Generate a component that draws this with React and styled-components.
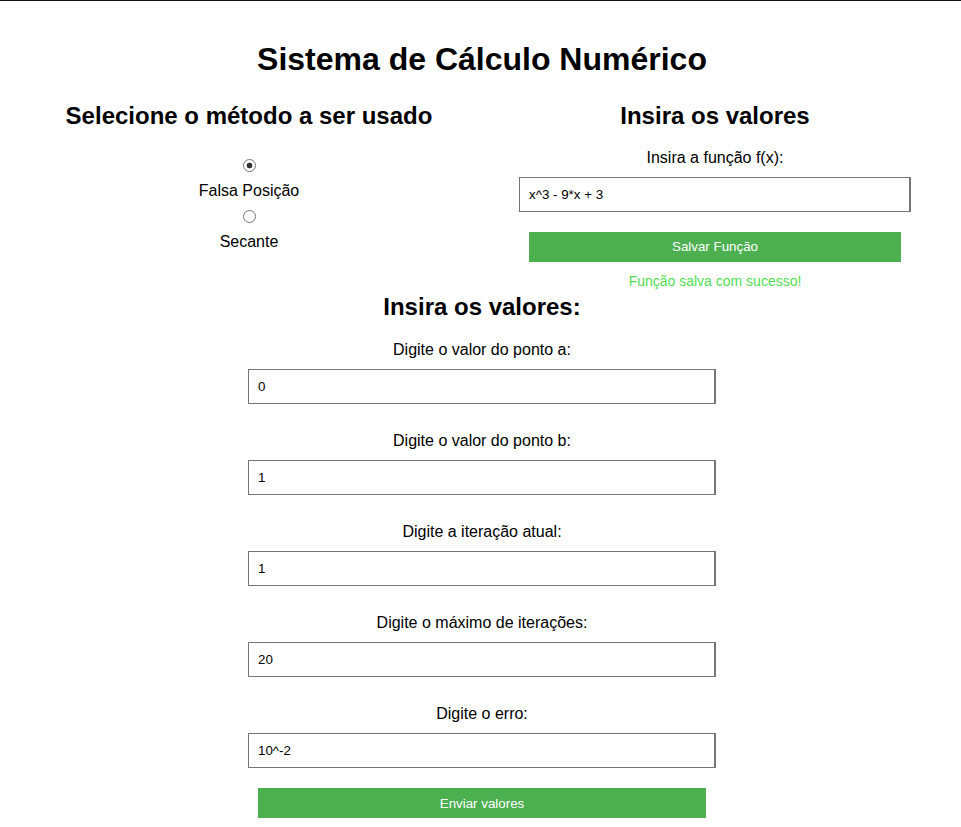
import React, { useState } from 'react'
import styled, { createGlobalStyle } from 'styled-components'

const GlobalStyle = createGlobalStyle`
  * {
    box-sizing: border-box;
  }

  body {
    margin: 0;
    background: #fff;
    color: #000;
    font-family: "Liberation Sans", Arial, sans-serif;
  }
`

const Page = styled.div`
  border-top: 1px solid #111;
  padding: 0 13px 0 16px;
  min-height: 100vh;
`

const Title = styled.h1`
  margin: 40px 0 0;
  font-size: 32px;
  font-weight: bold;
  line-height: normal;
  text-align: center;
`

const Columns = styled.div`
  display: grid;
  grid-template-columns: 1fr 1fr;
  margin-top: 24px;
`

const Column = styled.div`
  display: flex;
  flex-direction: column;
  align-items: center;
`

const SectionTitle = styled.h2`
  margin: ${p => (p.$top ? `${p.$top}px 0 0` : '0')};
  font-size: 24px;
  font-weight: bold;
  line-height: normal;
  text-align: center;
`

const RadioList = styled.div`
  display: flex;
  flex-direction: column;
  align-items: center;
  margin-top: 29px;
`

const Radio = styled.input.attrs({ type: 'radio' })`
  appearance: none;
  width: 13px;
  height: 13px;
  margin: 0;
  border: 1px solid #767676;
  border-radius: 50%;
  background: #fff;

  &:checked {
    background: radial-gradient(circle, #333 0 2.6px, #fff 3.2px);
  }
`

const OptionLabel = styled.label`
  margin: 9.5px 0 10.5px;
  font-size: 16px;
  line-height: 18.4px;
`

const FieldLabel = styled.label`
  margin-top: ${p => p.$top}px;
  font-size: 16px;
  line-height: 18.4px;
  text-align: center;
`

const TextInput = styled.input`
  width: ${p => p.$width}px;
  height: 35px;
  margin-top: 10px;
  padding: 0 9px;
  border: 1px solid #767676;
  border-right-width: 2px;
  background: #fff;
  color: #000;
  font-family: "Liberation Sans", Arial, sans-serif;
  font-size: 13.33px;
  outline: none;
`

const GreenButton = styled.button`
  width: ${p => p.$width}px;
  height: 30px;
  margin-top: 20px;
  border: none;
  background: #4caf50;
  color: #fff;
  font-family: "Liberation Sans", Arial, sans-serif;
  font-size: 13.33px;
  cursor: pointer;
`

const SuccessMessage = styled.p`
  margin: 11px 0 0;
  color: #52dc52;
  font-size: 14px;
  line-height: 16px;
`

const MainForm = styled.div`
  display: flex;
  flex-direction: column;
  align-items: center;
`

const fields = [
  { label: 'Digite o valor do ponto a:', value: '0' },
  { label: 'Digite o valor do ponto b:', value: '1' },
  { label: 'Digite a iteração atual:', value: '1' },
  { label: 'Digite o máximo de iterações:', value: '20' },
  { label: 'Digite o erro:', value: '10^-2' },
]

export default function App() {
  const [method, setMethod] = useState('falsa')

  return (
    <Page>
      <GlobalStyle />
      <Title>Sistema de Cálculo Numérico</Title>

      <Columns>
        <Column>
          <SectionTitle>Selecione o método a ser usado</SectionTitle>
          <RadioList>
            <Radio
              id="falsa"
              name="metodo"
              checked={method === 'falsa'}
              onChange={() => setMethod('falsa')}
            />
            <OptionLabel htmlFor="falsa">Falsa Posição</OptionLabel>
            <Radio
              id="secante"
              name="metodo"
              checked={method === 'secante'}
              onChange={() => setMethod('secante')}
            />
            <OptionLabel htmlFor="secante">Secante</OptionLabel>
          </RadioList>
        </Column>

        <Column>
          <SectionTitle>Insira os valores</SectionTitle>
          <FieldLabel $top={18.5}>Insira a função f(x):</FieldLabel>
          <TextInput $width={392} defaultValue="x^3 - 9*x + 3" />
          <GreenButton $width={372}>Salvar Função</GreenButton>
          <SuccessMessage>Função salva com sucesso!</SuccessMessage>
        </Column>
      </Columns>

      <MainForm>
        <SectionTitle $top={4}>Insira os valores:</SectionTitle>
        {fields.map((f, i) => (
          <React.Fragment key={f.label}>
            <FieldLabel $top={i === 0 ? 20 : 27.6}>{f.label}</FieldLabel>
            <TextInput $width={468} defaultValue={f.value} />
          </React.Fragment>
        ))}
        <GreenButton $width={448}>Enviar valores</GreenButton>
      </MainForm>
    </Page>
  )
}
